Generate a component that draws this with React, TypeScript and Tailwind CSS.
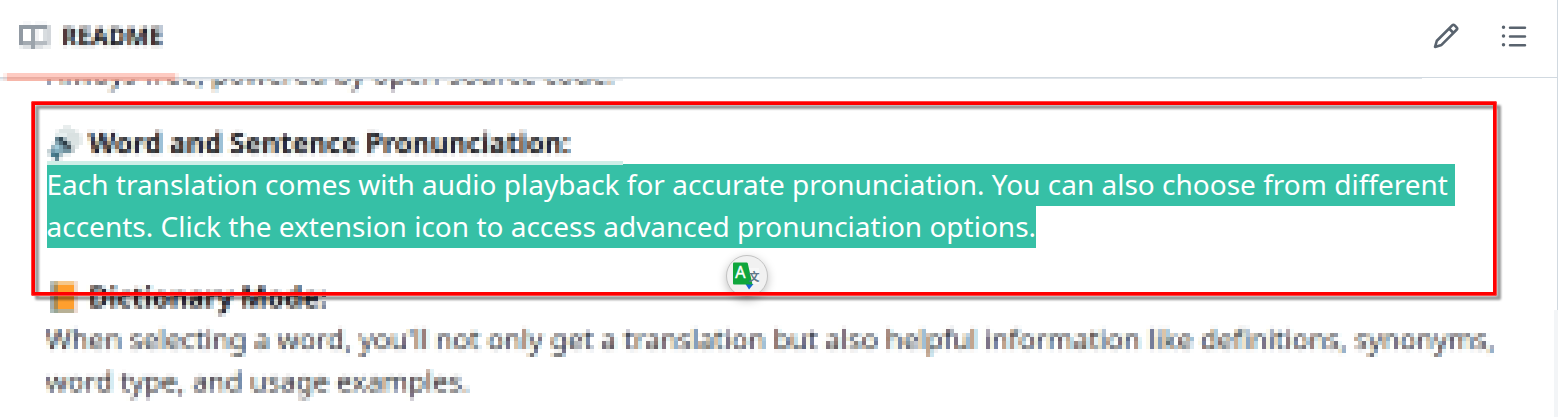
import React from "react";

type Cell = [number, number, number, number, string];

function Cells({ cells, w, h, className }: { cells: Cell[]; w: number; h: number; className: string }) {
  return (
    <svg viewBox={`0 0 ${w} ${h}`} width={w} height={h} className={className} shapeRendering="crispEdges" aria-hidden="true">
      {cells.map(([x, y, cw, ch, fill], i) => (
        <rect key={i} x={x * 4} y={y * 4} width={cw * 4} height={ch * 4} fill={fill} />
      ))}
    </svg>
  );
}

const openBook: Cell[] = [
  [1, 0, 2, 1, "#f7f8fa"], [4, 0, 3, 1, "#f7f8fa"],
  [0, 1, 7, 1, "#929ba4"], [7, 1, 1, 5, "#d3d7db"],
  [0, 2, 1, 4, "#929aa3"], [3, 2, 1, 5, "#9ba3ab"], [6, 2, 1, 3, "#d9dde0"], [4, 2, 1, 3, "#f0f1f3"],
  [1, 5, 2, 1, "#a3aab1"], [4, 5, 3, 1, "#b4bac0"],
  [0, 6, 1, 1, "#eef0f1"], [1, 6, 2, 1, "#dde0e3"], [4, 6, 2, 1, "#dde0e3"], [6, 6, 2, 1, "#eef0f1"],
];

const speaker: Cell[] = [
  [4, 0, 2, 1, "#e8eded"],
  [2, 1, 1, 1, "#f3f5f5"], [3, 1, 4, 1, "#dde5e5"], [7, 1, 1, 1, "#f2f4f4"],
  [2, 2, 1, 1, "#e2ebec"], [3, 2, 2, 1, "#e7efef"], [5, 2, 3, 1, "#d9e1e1"], [8, 2, 1, 1, "#f0f3f3"],
  [2, 3, 1, 1, "#63808d"], [3, 3, 1, 1, "#364b57"], [4, 3, 1, 1, "#a5b8bf"], [5, 3, 3, 1, "#dae2e2"], [8, 3, 1, 1, "#e8eded"],
  [1, 4, 1, 1, "#eef3f4"], [2, 4, 1, 1, "#86a5b1"], [3, 4, 1, 1, "#526d79"], [4, 4, 1, 1, "#2d3d47"], [5, 4, 1, 1, "#9daeb3"], [6, 4, 2, 1, "#dbe3e3"], [8, 4, 1, 1, "#e8eded"],
  [1, 5, 1, 1, "#9bb6c1"], [2, 5, 1, 1, "#a1ccdb"], [3, 5, 1, 1, "#82a8b7"], [4, 5, 1, 1, "#58727f"], [5, 5, 1, 1, "#4c5960"], [6, 5, 1, 1, "#c9d3d5"], [7, 5, 1, 1, "#e5eaea"],
  [0, 6, 1, 1, "#c6d2d5"], [1, 6, 1, 1, "#729bad"], [2, 6, 1, 1, "#82b0c1"], [3, 6, 1, 1, "#85a9b7"], [4, 6, 2, 1, "#70919e"], [6, 6, 1, 1, "#c4ced1"],
  [0, 7, 1, 1, "#dce5e7"], [1, 7, 1, 1, "#487b8e"], [2, 7, 1, 1, "#417181"], [3, 7, 1, 1, "#afc3ca"], [4, 7, 2, 1, "#edf1f2"],
  [1, 8, 1, 1, "#e2eaec"], [2, 8, 1, 1, "#638795"], [3, 8, 1, 1, "#edf1f2"],
];

const orangeBook: Cell[] = [
  [0, 0, 1, 1, "#b8bfbb"], [1, 0, 1, 1, "#c5b48d"], [2, 0, 4, 1, "#f5c88c"], [6, 0, 1, 1, "#f4e0d4"],
  [0, 1, 1, 6, "#a5adab"], [1, 1, 1, 6, "#b08c50"], [2, 1, 4, 6, "#ff9f2e"], [6, 1, 1, 6, "#f3ddcf"],
  [0, 7, 1, 1, "#aebdb9"], [1, 7, 1, 1, "#98a594"], [2, 7, 4, 1, "#b7b095"], [6, 7, 1, 1, "#ecdcd3"],
];

/* Renders text as 4px blocks with LCD-style colour fringes: each channel is darkened by its own shifted copy. */
function MosaicFilter() {
  return (
    <svg width="0" height="0" className="absolute" aria-hidden="true">
      <filter id="mosaic" x="0" y="0" width="1" height="1" colorInterpolationFilters="sRGB">
        <feGaussianBlur in="SourceGraphic" stdDeviation="1.15 1.2" result="soft" />
        <feColorMatrix in="soft" values="0 0 0 0 0.12  0 0 0 0 1  0 0 0 0 1  0 0 0 1.05 0" result="rInk" />
        <feOffset in="rInk" dx="1" dy="0" result="rLayer" />
        <feColorMatrix in="soft" values="0 0 0 0 1  0 0 0 0 0.137  0 0 0 0 1  0 0 0 1.05 0" result="gLayer" />
        <feColorMatrix in="soft" values="0 0 0 0 1  0 0 0 0 1  0 0 0 0 0.157  0 0 0 1.05 0" result="bInk" />
        <feOffset in="bInk" dx="-1" dy="0" result="bLayer" />
        <feFlood floodColor="#fff" result="paper" />
        <feBlend in="rLayer" in2="paper" mode="multiply" result="m1" />
        <feBlend in="gLayer" in2="m1" mode="multiply" result="m2" />
        <feBlend in="bLayer" in2="m2" mode="multiply" result="m3" />
        <feColorMatrix in="m3" type="saturate" values="0.5" result="inked" />
        <feFlood x="2" y="1" width="1" height="1" floodColor="#000" result="dot" />
        <feOffset in="dot" dx="0" dy="0" x="0" y="0" width="4" height="4" result="cell" />
        <feTile in="cell" result="grid" />
        <feComposite in="inked" in2="grid" operator="in" result="p0" />
        <feOffset in="p0" dx="1" dy="0" result="l" />
        <feMerge result="p1"><feMergeNode in="p0" /><feMergeNode in="l" /></feMerge>
        <feOffset in="p1" dx="-2" dy="0" result="r" />
        <feMerge result="p2"><feMergeNode in="p1" /><feMergeNode in="r" /></feMerge>
        <feOffset in="p2" dx="0" dy="-1" result="u" />
        <feMerge result="p3"><feMergeNode in="p2" /><feMergeNode in="u" /></feMerge>
        <feOffset in="p3" dx="0" dy="2" result="d" />
        <feMerge><feMergeNode in="p3" /><feMergeNode in="d" /></feMerge>
      </filter>
    </svg>
  );
}

export default function App() {
  return (
    <div className="relative h-[417px] w-[1568px] overflow-hidden bg-white font-['Noto_Sans',sans-serif] text-[28px] leading-[42px] text-[#1f2328]">
      <MosaicFilter />
      <div className="flex h-full w-[1558px] flex-col border-r border-[#d1d9e0]">
        <header className="flex h-[78px] shrink-0 items-start justify-between border-b border-[#d1d9e0] pl-[19px]">
          <div className="flex items-start gap-2">
            <Cells cells={openBook} w={32} h={28} className="mt-[21px] shrink-0" />
            <h2 className="mt-[13px] h-[48px] pl-[3px] pr-2 pt-[2px] text-[24.5px] font-bold [filter:url(#mosaic)]">README</h2>
          </div>
          <div className="mr-[29px] mt-[22px] flex gap-10 text-[#59636e]">
            <svg width="28" height="28" viewBox="0 0 16 16" fill="currentColor" aria-hidden="true">
              <path d="M11.013 1.427a1.75 1.75 0 0 1 2.474 0l1.086 1.086a1.75 1.75 0 0 1 0 2.474l-8.61 8.61c-.21.21-.47.364-.756.445l-3.251.93a.75.75 0 0 1-.927-.928l.929-3.25c.081-.286.235-.547.445-.758l8.61-8.61Zm.176 4.823L9.75 4.81l-6.286 6.287a.253.253 0 0 0-.064.108l-.558 1.953 1.953-.558a.253.253 0 0 0 .108-.064Zm1.238-3.763a.25.25 0 0 0-.354 0L10.811 3.75l1.439 1.44 1.263-1.263a.25.25 0 0 0 0-.354Z" />
            </svg>
            <svg width="28" height="28" viewBox="0 0 16 16" fill="currentColor" aria-hidden="true">
              <path d="M5.75 2.5h8.5a.75.75 0 0 1 0 1.5h-8.5a.75.75 0 0 1 0-1.5Zm0 5h8.5a.75.75 0 0 1 0 1.5h-8.5a.75.75 0 0 1 0-1.5Zm0 5h8.5a.75.75 0 0 1 0 1.5h-8.5a.75.75 0 0 1 0-1.5ZM2 14a1 1 0 1 1 0-2 1 1 0 0 1 0 2Zm1-6a1 1 0 1 1-2 0 1 1 0 0 1 2 0ZM2 4a1 1 0 1 1 0-2 1 1 0 0 1 0 2Z" />
            </svg>
          </div>
        </header>

        <main className="min-h-0 flex-1 overflow-hidden pl-[46px]">
          <p className="-mt-[29px] ml-px h-[56px] whitespace-nowrap pt-[2px] [filter:url(#mosaic)]">
            Always free, powered by open-source code.
          </p>
          <div className="ml-px mt-4 flex h-10 items-start">
            <Cells cells={speaker} w={36} h={36} className="mt-1 shrink-0" />
            <strong className="h-[43px] whitespace-nowrap pl-[6px] pr-3 font-bold [filter:url(#mosaic)]">
              Word and Sentence Pronunciation:
            </strong>
          </div>
          <div className="relative z-10 ml-px h-1 w-[576px] bg-[#cdeee7]" />
          <p className="-mt-px ml-px flex flex-col items-start whitespace-nowrap text-white">
            <span className="h-[42px] w-[1408px] bg-[#36c0a6] leading-[40px] -indent-[0.5px]">Each translation comes with audio playback for accurate pronunciation. You can also choose from different</span>
            <span className="h-[42px] w-[989px] bg-[#36c0a6] leading-[40px] -indent-[0.5px]">accents. Click the extension icon to access advanced pronunciation options.</span>
          </p>
          <div className="ml-1 mt-[25px] flex h-[44px] items-start gap-2">
            <Cells cells={orangeBook} w={28} h={32} className="mt-2 shrink-0" />
            <strong className="h-[44px] whitespace-nowrap pl-[3px] pr-3 pt-[2px] font-bold [filter:url(#mosaic)]">
              Dictionary Mode:
            </strong>
          </div>
          <p className="h-[100px] whitespace-nowrap text-[#1f2328]/90 [filter:url(#mosaic)]">
            When selecting a word, you'll not only get a translation but also helpful information like definitions, synonyms,
            <br />
            word type, and usage examples.
          </p>
        </main>
      </div>

      <div className="absolute left-0 top-[77px] h-[4px] w-[1422px] border-t border-[#d1d9e0]">
        <div className="h-px bg-[#e0e5ea]" />
        <div className="-mt-px h-[3px] w-[623px] bg-[#d1d9e0]/40" />
      </div>
      <div className="absolute left-[3px] top-[73px] h-[8px] w-[176px] bg-[#fd8c73]/15 px-1">
        <div className="h-1 bg-[#fecbc2]" />
        <div className="h-1 bg-[#fd8c73]/50" />
      </div>
      <div className="absolute bottom-0 right-[10px] h-[107px] w-1 bg-[#f3f5f7]" />

      <div className="absolute left-[726px] top-[255px] size-[42px] rounded-full border border-[#c3c3c3] bg-[#f1f1f1] shadow-[0_3px_10px_rgba(0,0,0,0.25)]">
        <svg width="40" height="40" viewBox="0 0 40 40" aria-hidden="true">
          <path d="M20 12h12v16H22z" fill="#f7f7f7" />
          <path d="M18.5 28h8l-4.5 5.5z" fill="#1967d2" />
          <path d="M7 6.5h12.5q1 0 1.3 1L25.5 28.5H7q-1 0-1-1v-20q0-1 1-1z" fill="#0fa63c" />
          <text x="8.2" y="21.5" fontSize="16" fill="#fff" stroke="#fff" strokeWidth="0.4" fontFamily="Noto Sans, sans-serif">A</text>
          <text x="21.5" y="25" fontSize="11" fontWeight="700" fill="#607887" fontFamily="Noto Sans CJK SC, sans-serif">文</text>
        </svg>
      </div>

      <div className="absolute left-[31px] top-[101px] h-[195px] w-[1466px] rounded-[2px] border-[4px] border-[#ff0000] outline-[1px] -outline-offset-1 outline-[#ff4545] [filter:drop-shadow(4px_4px_1px_rgba(0,0,0,0.4))]" />
    </div>
  );
}
